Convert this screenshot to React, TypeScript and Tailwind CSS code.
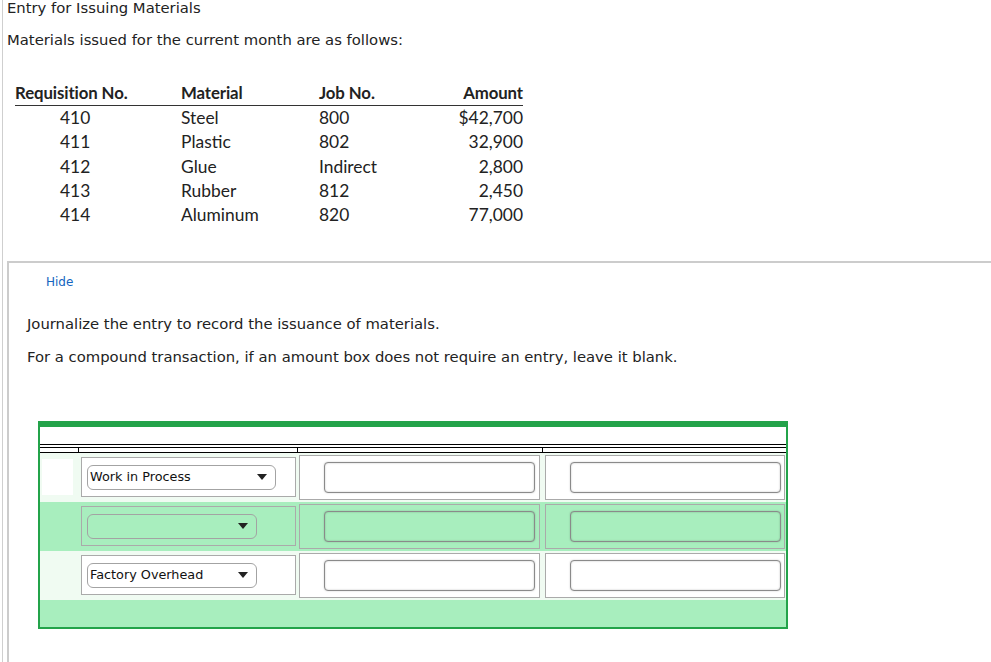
import React from "react"

const rows = [
  { req: "410", material: "Steel", job: "800", amount: "$42,700" },
  { req: "411", material: "Plastic", job: "802", amount: "32,900" },
  { req: "412", material: "Glue", job: "Indirect", amount: "2,800" },
  { req: "413", material: "Rubber", job: "812", amount: "2,450" },
  { req: "414", material: "Aluminum", job: "820", amount: "77,000" },
]

const Caret = () => (
  <svg width="10" height="6" viewBox="0 0 10 6" className="shrink-0">
    <path d="M0 0 L10 0 L5 6 Z" fill="#222" />
  </svg>
)

const AccountSelect = ({ label, wide }: { label: string; wide?: boolean }) => (
  <div
    className={`flex h-[25px] items-center justify-between rounded-[6px] border border-[#a3a3a3] pl-[2px] pr-[8px] ${
      wide ? "w-[189px] bg-white" : "w-[170px]"
    }`}
  >
    <span className="text-[12.8px] leading-none text-[#111]">{label}</span>
    <Caret />
  </div>
)

const AmountInput = ({ green }: { green?: boolean }) => (
  <div
    className={`h-[31px] w-[211px] rounded-[4px] border border-[#8a8a8a] shadow-[inset_0_0_2px_rgba(0,0,0,0.25),0_0_2px_rgba(0,0,0,0.2)] ${
      green ? "bg-[#a8eebe]" : "bg-white"
    }`}
  />
)

const JournalRow = ({ label, green, first }: { label: string; green?: boolean; first?: boolean }) => (
  <div className={`grid h-[49px] grid-cols-[38px_219px_245px_244px] ${green ? "bg-[#a8eebe]" : "bg-[#f0fbf2]"}`}>
    <div className="pl-[2px] pt-[6px]">{first && <div className="h-[36px] w-[31px] bg-white" />}</div>
    <div className="pl-[3px] pr-[1px] pt-[4px]">
      <div className={`flex h-[40px] items-center border border-[#aaa] pl-[5px] ${green ? "" : "bg-white"}`}>
        <AccountSelect label={label} wide={first} />
      </div>
    </div>
    <div className="px-[2px] pt-[2px]">
      <div className={`flex h-[45px] items-center border border-[#aaa] pl-[24px] ${green ? "" : "bg-white"}`}>
        <AmountInput green={green} />
      </div>
    </div>
    <div className="pl-[3px] pr-[1px] pt-[2px]">
      <div className={`flex h-[45px] items-center border border-[#aaa] pl-[24px] ${green ? "" : "bg-white"}`}>
        <AmountInput green={green} />
      </div>
    </div>
  </div>
)

export default function App() {
  return (
    <div className="h-[662px] w-[991px] overflow-hidden bg-white" style={{ fontFamily: '"DejaVu Sans", Verdana, sans-serif' }}>
      <div className="ml-[2px] h-full border-l border-[#cfcfcf]">
        <div className="pl-[4px] text-[#222]">
          <p className="text-[14.8px] leading-[16px]">Entry for Issuing Materials</p>
          <p className="mt-[16px] text-[14.8px] leading-[16px]">Materials issued for the current month are as follows:</p>
        </div>

        <div className="ml-[12px] mt-[35px] w-[508px] text-[#222]" style={{ fontFamily: "Lato, sans-serif" }}>
          <div className="grid h-[23px] grid-cols-[110px_138px_130px_130px] items-start whitespace-nowrap border-b border-[#333] pt-[1px] text-[16.8px] font-bold leading-[18px] tracking-[-0.1px]">
            <span>Requisition No.</span>
            <span className="pl-[56px]">Material</span>
            <span className="pl-[56px]">Job No.</span>
            <span className="text-right">Amount</span>
          </div>
          {rows.map((r) => (
            <div key={r.req} className="grid h-[24.3px] grid-cols-[110px_138px_130px_130px] items-center whitespace-nowrap text-[17.4px] leading-[20px]">
              <span className="pl-[45px]">{r.req}</span>
              <span className="pl-[56px]">{r.material}</span>
              <span className="pl-[56px]">{r.job}</span>
              <span className="text-right">{r.amount}</span>
            </div>
          ))}
        </div>

        <div className="ml-[4px] mt-[34px] h-full border-l-2 border-t-2 border-[#cccccc]">
          <p className="pl-[37px] pt-[12px] text-[12px] leading-[14px] text-[#1565c0]">Hide</p>
          <p className="mt-[27px] pl-[18px] text-[14.8px] leading-[16px] text-[#222]">
            Journalize the entry to record the issuance of materials.
          </p>
          <p className="mt-[17px] pl-[18px] text-[14.8px] leading-[16px] text-[#222]">
            For a compound transaction, if an amount box does not require an entry, leave it blank.
          </p>

          <div className="ml-[29px] mt-[56px] w-[750px] border-x-2 border-b-2 border-[#23a34a]">
            <div className="-mx-[2px] h-[6px] bg-[#23a34a]" />
            <div className="h-[17px] bg-white" />
            <div className="grid h-[9px] grid-cols-[38px_219px_245px_244px] border-y border-black">
              <div className="mt-[2px] border-t border-black" />
              <div className="mt-[2px] border-l border-t border-black" />
              <div className="mt-[2px] border-l border-t border-black" />
              <div className="mt-[2px] border-l border-t border-black" />
            </div>
            <JournalRow label="Work in Process" first />
            <JournalRow label="" green />
            <JournalRow label="Factory Overhead" />
            <div className="h-[27px] bg-[#a8eebe]" />
          </div>
        </div>
      </div>
    </div>
  )
}
